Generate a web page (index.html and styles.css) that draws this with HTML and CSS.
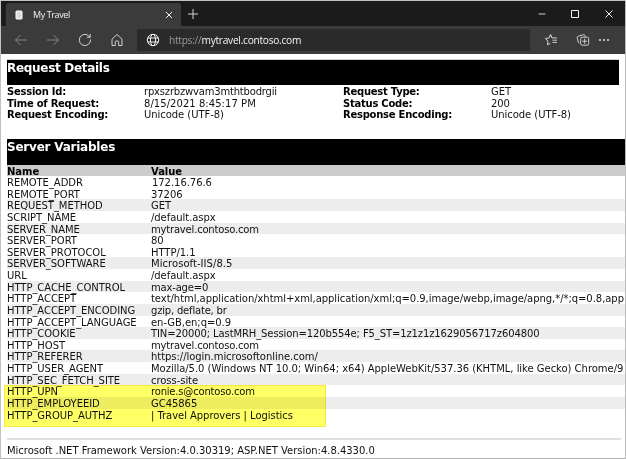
FILE: index.html
```html
<!DOCTYPE html>
<html lang="en">
<head>
<meta charset="utf-8">
<title>My Travel</title>
<link rel="stylesheet" href="styles.css">
</head>
<body>
<div class="window">
  <header class="titlebar">
    <div class="tab">
      <svg class="page-icon" width="8" height="10" viewBox="0 0 8 10"><rect x="1" y="1" width="6" height="8" rx=".5" fill="#ddd" stroke="#fff"/></svg>
      <span class="tab-title">My Travel</span>
      <svg width="8" height="8" viewBox="0 0 8 8" class="line bright"><path d="M1 1l6 6M7 1L1 7"/></svg>
    </div>
    <svg class="new-tab line" width="12" height="12" viewBox="0 0 12 12"><path d="M6 1v10M1 6h10"/></svg>
    <div class="controls">
      <svg class="line" width="8" height="10" viewBox="0 0 8 10"><path d="M.5 5h7"/></svg>
      <svg class="line bright" width="10" height="10" viewBox="0 0 10 10"><path d="M1.5 1.5h7v7h-7z"/></svg>
      <svg class="line bright" width="10" height="10" viewBox="0 0 10 10"><path d="M1.5 1.5l7 7M8.500 1.500l-7 7"/></svg>
    </div>
  </header>
  <nav class="toolbar">
    <div class="nav-icons">
      <svg class="line dim" width="14" height="14" viewBox="0 0 14 14"><path d="M13 7H1.500M6.500 2L1.500 7l5 5"/></svg>
      <svg class="line dim" width="14" height="14" viewBox="0 0 14 14"><path d="M1 7h11.500M7.500 2l5 5-5 5"/></svg>
      <svg class="line" width="14" height="14" viewBox="0 0 14 14"><path d="M12.500 6.500A5.600 5.600 0 1 1 10.300 2.500L12 4M12.200 1v3.300H9"/></svg>
      <svg class="line" width="14" height="14" viewBox="0 0 14 14"><path d="M2 6.200L7 1.500l5 4.700v6.300H8.700V8.800a.8.8 0 0 0-.8-.8H6.100a.8.8 0 0 0-.8.8v3.700H2z"/></svg>
    </div>
    <div class="address">
      <svg class="line bright" width="14" height="14" viewBox="0 0 14 14"><circle cx="7" cy="7" r="5.700"/><ellipse cx="7" cy="7" rx="2.600" ry="5.700"/><path d="M1.800 5h10.400M1.800 9h10.400"/></svg>
      <span class="url"><span class="scheme">https://</span>mytravel.contoso.com</span>
    </div>
    <svg class="favorites line" width="14" height="14" viewBox="0 0 14 14"><path d="M8 4.900L6.500 1.700 4.900 5l-3.600.5L4 8.100l-.6 3.700 2.900-1.500M6.500 1.700L8 4.900h4.900M8.500 7.200h4.400M8.500 9.400h4.400"/></svg>
    <svg class="collections line" width="14" height="14" viewBox="0 0 14 14"><path d="M3.500 10.300L2.400 9.600 1.200 4.700a1.200 1.200 0 0 1 .9-1.400l5.300-1.600a1.200 1.200 0 0 1 1.500.8l.3 1.300"/><rect x="4.700" y="4.200" width="8" height="8" rx="1.500"/><path d="M8.700 5.700v5M6.200 8.200h5"/></svg>
    <svg class="more" width="12" height="12" viewBox="0 0 12 12"><circle cx="2" cy="6" r="1"/><circle cx="6" cy="6" r="1"/><circle cx="10" cy="6" r="1"/></svg>
  </nav>
  <main class="page">
    <section class="details">
      <h2 class="banner">Request Details</h2>
      <dl class="facts">
        <dt>Session Id:</dt><dd class="tight">rpxszrbzwvam3mthtbodrgii</dd><dt>Request Type:</dt><dd>GET</dd>
        <dt>Time of Request:</dt><dd class="loose">8/15/2021 8:45:17 PM</dd><dt>Status Code:</dt><dd>200</dd>
        <dt>Request Encoding:</dt><dd>Unicode (UTF-8)</dd><dt>Response Encoding:</dt><dd>Unicode (UTF-8)</dd>
      </dl>
    </section>
    <section class="variables">
      <h2 class="banner">Server Variables</h2>
      <div class="row head"><span>Name</span><span>Value</span></div>
      <div class="row"><span>REMOTE_ADDR</span><span class="nudge">172.16.76.6</span></div>
      <div class="row"><span>REMOTE_PORT</span><span>37206</span></div>
      <div class="row alt"><span>REQUEST_METHOD</span><span>GET</span></div>
      <div class="row"><span>SCRIPT_NAME</span><span>/default.aspx</span></div>
      <div class="row alt"><span>SERVER_NAME</span><span class="tight">mytravel.contoso.com</span></div>
      <div class="row"><span>SERVER_PORT</span><span>80</span></div>
      <div class="row"><span>SERVER_PROTOCOL</span><span>HTTP/1.1</span></div>
      <div class="row alt"><span>SERVER_SOFTWARE</span><span class="loose">Microsoft-IIS/8.5</span></div>
      <div class="row"><span>URL</span><span>/default.aspx</span></div>
      <div class="row alt"><span>HTTP_CACHE_CONTROL</span><span class="tight">max-age=0</span></div>
      <div class="row"><span>HTTP_ACCEPT</span><span class="accept">text/html,application/xhtml+xml,application/xml;q=0.9,image/webp,image/apng,*/*;q=0.8,app</span></div>
      <div class="row alt"><span>HTTP_ACCEPT_ENCODING</span><span class="tight">gzip, deflate, br</span></div>
      <div class="row"><span>HTTP_ACCEPT_LANGUAGE</span><span>en-GB,en;q=0.9</span></div>
      <div class="row alt"><span>HTTP_COOKIE</span><span class="cookie">TIN=20000; LastMRH_Session=120b554e; F5_ST=1z1z1z1629056717z604800</span></div>
      <div class="row"><span>HTTP_HOST</span><span class="tight">mytravel.contoso.com</span></div>
      <div class="row alt"><span>HTTP_REFERER</span><span>https://login.microsoftonline.com/</span></div>
      <div class="row"><span>HTTP_USER_AGENT</span><span class="agent">Mozilla/5.0 (Windows NT 10.0; Win64; x64) AppleWebKit/537.36 (KHTML, like Gecko) Chrome/9</span></div>
      <div class="row alt"><span>HTTP_SEC_FETCH_SITE</span><span>cross-site</span></div>
      <div class="marked">
        <div class="row"><span>HTTP_UPN</span><span class="tight">ronie.s@contoso.com</span></div>
        <div class="row alt"><span>HTTP_EMPLOYEEID</span><span>GC45865</span></div>
        <div class="row"><span>HTTP_GROUP_AUTHZ</span><span>| Travel Approvers | Logistics</span></div>
        <div class="highlight"></div>
      </div>
    </section>
    <footer class="version">Microsoft .NET Framework Version:4.0.30319; ASP.NET Version:4.8.4330.0</footer>
  </main>
</div>
</body>
</html>
```
FILE: styles.css
```css
* { box-sizing: border-box; }
body { margin: 0; overflow: hidden; }
svg { display: block; flex: none; }
.window {
  width: 626px;
  height: 459px;
  display: flex;
  flex-direction: column;
  overflow: hidden;
  border: 1px solid #bfc3bf;
  border-right-color: #bbb;
  border-bottom-color: #b5b5b5;
  background: #fff;
  color: #111;
  font-family: "DejaVu Sans", Verdana, sans-serif;
  font-size: 10px;
  letter-spacing: -.05px;
}
.line { fill: none; stroke: #d0d0d0; stroke-width: 1; }
.line.bright { stroke: #f2f2f2; }
.line.dim { stroke: #858585; }
.titlebar {
  height: 25px;
  flex: none;
  display: flex;
  align-items: center;
  background: #1b1b1b;
}
.tab {
  width: 175px;
  height: 23px;
  margin: 2px 0 0 5px;
  padding: 0 8px 0 9px;
  display: flex;
  align-items: center;
  border-radius: 3px 3px 0 0;
  background: #3b3b3b;
}
.tab-title {
  flex: 1;
  margin-left: 10px;
  color: #f0f0f0;
  font: 9px/14px "Open Sans", sans-serif;
  letter-spacing: -.4px;
}
.new-tab { margin: 0 0 0 6px; }
.controls {
  margin: 1px 11px 0 auto;
  display: flex;
  align-items: center;
  gap: 24px;
}
.toolbar {
  height: 28px;
  flex: none;
  display: flex;
  align-items: center;
  background: #3b3b3b;
  padding-bottom: 1px;
}
.nav-icons { display: flex; gap: 18px; margin-left: 13px; }
.address {
  width: 393px;
  height: 22px;
  margin-left: 13px;
  padding-left: 9px;
  display: flex;
  align-items: center;
  gap: 9px;
  border-radius: 2px;
  background: #2a2a2a;
}
.url {
  color: #f5f5f5;
  font: 10.2px/16px "Open Sans", sans-serif;
  letter-spacing: -.28px;
  white-space: nowrap;
}
.scheme { color: #999; }
.favorites { margin-left: 14px; }
.collections { margin-left: 18px; }
.more { margin-left: 8px; fill: #e5e5e5; }
.page { padding: 5px 0 0 6px; }
.details { width: 612px; border-top: 1px solid #d5d5d5; }
.banner {
  height: 25px;
  margin: 0;
  background: #000;
  color: #fff;
  font-size: 12px;
  line-height: 17px;
  letter-spacing: -.3px;
}
.facts {
  display: grid;
  grid-template-columns: 137px 199px 148px 1fr;
  grid-auto-rows: 11.7px;
  margin: 1px 0 0;
  line-height: 12.6px;
  white-space: nowrap;
}
.facts dt { font-weight: bold; color: #000; letter-spacing: -.25px; }
.facts dd { margin: 0; }
.variables { margin-top: 18px; }
.variables .banner { height: 26px; letter-spacing: -.22px; }
.row {
  height: 11.63px;
  line-height: 13.4px;
  display: grid;
  grid-template-columns: 144px 1fr;
  white-space: nowrap;
}
.row.head { height: 11px; line-height: 13px; background: #ccc; color: #000; font-weight: bold; }
.row.alt { background: #ededed; }
.facts .tight, .row .tight { letter-spacing: -.19px; }
.facts .loose, .row .loose { letter-spacing: .05px; }
.row .cookie { letter-spacing: -.11px; }
.row .accept { letter-spacing: -.05px; }
.row .agent { letter-spacing: -.03px; }
.nudge { padding-left: 1px; }
.marked { position: relative; }
.highlight {
  position: absolute;
  left: -3px;
  top: 0;
  width: 322px;
  height: 42px;
  border: 1px solid #f8e840;
  background: #ffff66;
  mix-blend-mode: multiply;
}
.version {
  width: 614px;
  margin-top: 18px;
  padding-top: 4px;
  border-top: 2px solid #e0e0e0;
  line-height: 13px;
  letter-spacing: -.02px;
  white-space: nowrap;
}
```
